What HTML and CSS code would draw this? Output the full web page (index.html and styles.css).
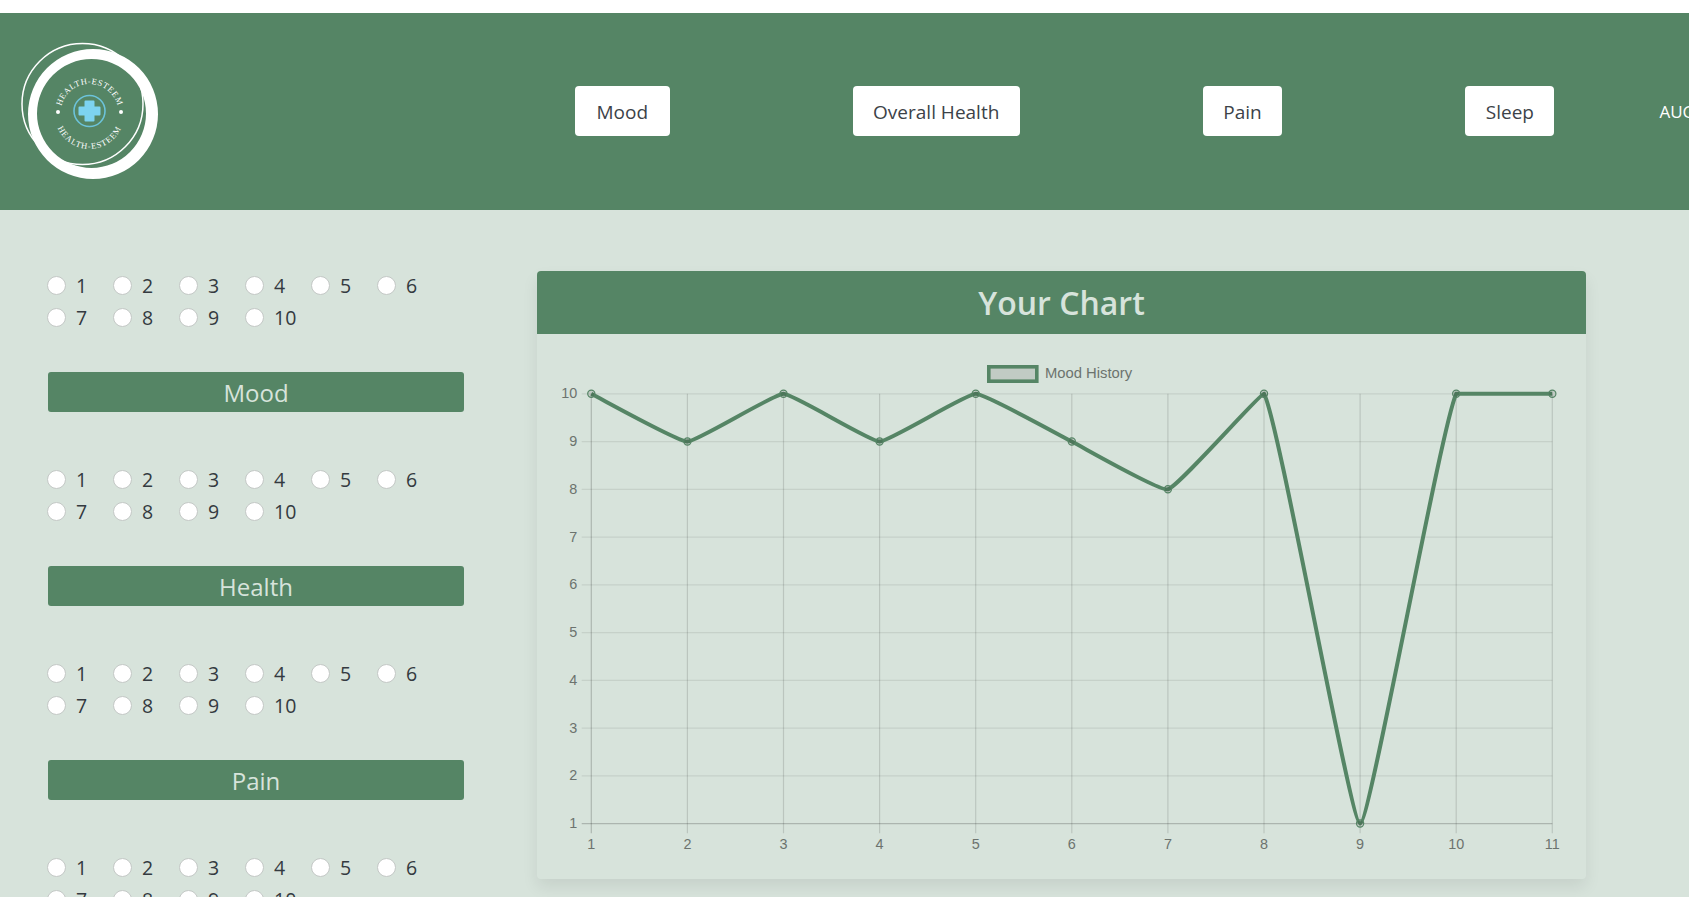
FILE: index.html
```html
<!DOCTYPE html>
<html lang="en">
<head>
    <meta charset="UTF-8">
    <meta name="viewport" content="width=device-width, initial-scale=1.0">
    <title>Health-Esteem</title>
    <link rel="stylesheet" href="styles.css">
</head>
<body>
    <header class="topbar">
        <svg class="logo" width="170" height="197" viewBox="0 13 170 197">
            <defs>
                <path id="arcTop" d="M 60.5 113 A 29 29 0 0 1 118.5 113"/>
                <path id="arcBottom" d="M 55 114.5 A 34.5 34.5 0 0 0 124 114.5"/>
            </defs>
            <path fill="#fff" fill-rule="evenodd" d="M 28 114 A 65 65 0 1 1 158 114 A 65 65 0 1 1 28 114 Z M 37 113.5 A 54.5 54.5 0 1 0 146 113.5 A 54.5 54.5 0 1 0 37 113.5 Z"/>
            <circle cx="82.5" cy="104" r="60.5" fill="none" stroke="#fff" stroke-width="1.5"/>
            <circle cx="89.5" cy="111" r="15.5" fill="none" stroke="#6cc3da" stroke-width="1.6"/>
            <path fill="#7dd3f0" d="M 85.5 100.5 h 8 a 1 1 0 0 1 1 1 v 5 h 5 a 1 1 0 0 1 1 1 v 7 a 1 1 0 0 1 -1 1 h -5 v 5 a 1 1 0 0 1 -1 1 h -8 a 1 1 0 0 1 -1 -1 v -5 h -5 a 1 1 0 0 1 -1 -1 v -7 a 1 1 0 0 1 1 -1 h 5 v -5 a 1 1 0 0 1 1 -1 Z"/>
            <circle cx="58" cy="112" r="2" fill="#fff"/>
            <circle cx="121" cy="112" r="2" fill="#fff"/>
            <text class="logo-text"><textPath href="#arcTop" startOffset="50%">HEALTH-ESTEEM</textPath></text>
            <text class="logo-text logo-text-bottom"><textPath href="#arcBottom" startOffset="50%">HEALTH-ESTEEM</textPath></text>
        </svg>
        <nav class="nav">
            <a class="nav-btn nav-btn-first" href="#">Mood</a>
            <a class="nav-btn" href="#">Overall Health</a>
            <a class="nav-btn" href="#">Pain</a>
            <a class="nav-btn" href="#">Sleep</a>
            <span class="nav-date">AUG</span>
        </nav>
    </header>

    <main class="content">
        <aside class="sidebar">
            <form class="rating">
                <div class="rating-options">
                    <label class="option"><input type="radio" name="mood">1</label>
                    <label class="option"><input type="radio" name="mood">2</label>
                    <label class="option"><input type="radio" name="mood">3</label>
                    <label class="option"><input type="radio" name="mood">4</label>
                    <label class="option"><input type="radio" name="mood">5</label>
                    <label class="option"><input type="radio" name="mood">6</label>
                    <label class="option"><input type="radio" name="mood">7</label>
                    <label class="option"><input type="radio" name="mood">8</label>
                    <label class="option"><input type="radio" name="mood">9</label>
                    <label class="option"><input type="radio" name="mood">10</label>
                </div>
                <button class="rating-btn" type="button">Mood</button>
            </form>
            <form class="rating">
                <div class="rating-options">
                    <label class="option"><input type="radio" name="health">1</label>
                    <label class="option"><input type="radio" name="health">2</label>
                    <label class="option"><input type="radio" name="health">3</label>
                    <label class="option"><input type="radio" name="health">4</label>
                    <label class="option"><input type="radio" name="health">5</label>
                    <label class="option"><input type="radio" name="health">6</label>
                    <label class="option"><input type="radio" name="health">7</label>
                    <label class="option"><input type="radio" name="health">8</label>
                    <label class="option"><input type="radio" name="health">9</label>
                    <label class="option"><input type="radio" name="health">10</label>
                </div>
                <button class="rating-btn" type="button">Health</button>
            </form>
            <form class="rating">
                <div class="rating-options">
                    <label class="option"><input type="radio" name="pain">1</label>
                    <label class="option"><input type="radio" name="pain">2</label>
                    <label class="option"><input type="radio" name="pain">3</label>
                    <label class="option"><input type="radio" name="pain">4</label>
                    <label class="option"><input type="radio" name="pain">5</label>
                    <label class="option"><input type="radio" name="pain">6</label>
                    <label class="option"><input type="radio" name="pain">7</label>
                    <label class="option"><input type="radio" name="pain">8</label>
                    <label class="option"><input type="radio" name="pain">9</label>
                    <label class="option"><input type="radio" name="pain">10</label>
                </div>
                <button class="rating-btn" type="button">Pain</button>
            </form>
            <form class="rating">
                <div class="rating-options">
                    <label class="option"><input type="radio" name="sleep">1</label>
                    <label class="option"><input type="radio" name="sleep">2</label>
                    <label class="option"><input type="radio" name="sleep">3</label>
                    <label class="option"><input type="radio" name="sleep">4</label>
                    <label class="option"><input type="radio" name="sleep">5</label>
                    <label class="option"><input type="radio" name="sleep">6</label>
                    <label class="option"><input type="radio" name="sleep">7</label>
                    <label class="option"><input type="radio" name="sleep">8</label>
                    <label class="option"><input type="radio" name="sleep">9</label>
                    <label class="option"><input type="radio" name="sleep">10</label>
                </div>
                <button class="rating-btn" type="button">Sleep</button>
            </form>
        </aside>

        <section class="card">
            <h2 class="card-header">Your Chart</h2>
            <svg id="moodChart" class="chart" width="1049" height="545" viewBox="0 0 1049 545"></svg>
        </section>
    </main>

    <script src="chart.js"></script>
</body>
</html>
```

FILE: styles.css
```css
html, body {
    height: 100%;
    overflow: hidden;
}
body {
    margin: 0;
    padding-top: 13px;
    box-sizing: border-box;
    background-color: #fff;
    font-family: "Open Sans", "Noto Sans", sans-serif;
    color: #212529;
}

/* top bar */
.topbar {
    display: flex;
    align-items: center;
    box-sizing: border-box;
    height: 197px;
    background-color: #558565;
}
.logo {
    flex: 0 0 auto;
    width: 170px;
    margin-right: 405px;
}
.logo-text {
    font-family: "Liberation Serif", serif;
    font-size: 8.5px;
    letter-spacing: 0.6px;
    text-anchor: middle;
    fill: #fff;
}
.logo-text-bottom {
    letter-spacing: 0.9px;
}
.nav {
    display: flex;
    align-items: center;
    flex: 0 0 auto;
    margin-bottom: 1px;
}
.nav-btn {
    display: block;
    flex: 0 0 auto;
    padding: 2px 20.5px 0;
    line-height: 48px;
    background-color: #fff;
    border-radius: 4px;
    font-size: 19px;
    color: #3c4248;
    text-decoration: none;
}
.nav-btn-first {
    padding-left: 21.5px;
    padding-right: 21.5px;
}
.nav-btn + .nav-btn {
    margin-left: 183px;
}
.nav-date {
    margin-left: 105px;
    font-size: 17px;
    color: #fff;
    white-space: nowrap;
}

/* page body */
.content {
    display: flex;
    align-items: flex-start;
    gap: 73px;
    padding: 59px 0 0 48px;
    min-height: 100%;
    background-color: #d7e3db;
}
.sidebar {
    flex: 0 0 416px;
}
.rating {
    margin-bottom: 51px;
}
.rating-options {
    display: grid;
    grid-template-columns: repeat(6, 66px);
    grid-auto-rows: 32px;
    margin: 0 0 39px -1px;
}
.option {
    display: flex;
    align-items: center;
    padding-top: 2px;
    font-size: 19.5px;
    line-height: 30px;
    color: #343a40;
}
.option input {
    appearance: none;
    flex: 0 0 auto;
    width: 19px;
    height: 19px;
    margin: -2px 10px 0 0;
    background-color: #fff;
    border: 1px solid #c4c8c6;
    border-radius: 50%;
}
.rating-btn {
    display: block;
    width: 100%;
    height: 40px;
    padding: 0;
    border: none;
    border-radius: 3px;
    background-color: #558565;
    color: #d7e3db;
    font-family: inherit;
    font-size: 24px;
}

/* chart card */
.card {
    flex: 0 0 1049px;
    margin-top: 2px;
    border-radius: 4px;
    box-shadow: 0 8px 16px rgba(0, 0, 0, 0.08);
}
.card-header {
    margin: 0;
    height: 63px;
    line-height: 63px;
    text-align: center;
    background-color: #558565;
    border-radius: 4px 4px 0 0;
    color: #d7e3db;
    font-size: 32px;
    font-weight: 600;
}
.chart {
    display: block;
}
.grid-h {
    stroke: rgba(0, 0, 0, 0.08);
    stroke-width: 1.2;
}
.grid-v {
    stroke: rgba(0, 0, 0, 0.13);
    stroke-width: 1.2;
}
.axis-line {
    stroke: rgba(0, 0, 0, 0.2);
    stroke-width: 1.2;
}
.tick-label, .legend-label {
    font-family: "Liberation Sans", Arial, sans-serif;
    font-size: 14.4px;
    fill: #6c736e;
}
.legend-label {
    font-size: 14.8px;
}
.mood-line {
    fill: none;
    stroke: #558565;
    stroke-width: 4;
}
.mood-point {
    fill: rgba(0, 0, 0, 0.1);
    stroke: #558565;
    stroke-width: 1.2;
}
.legend-box {
    fill: rgba(0, 0, 0, 0.1);
    stroke: #558565;
    stroke-width: 3.6;
}
```

FILE: chart.js
```js
// Draws the mood history line chart into the svg
const moodHistory = [10, 9, 10, 9, 10, 9, 8, 10, 1, 10, 10];

const chart = document.getElementById('moodChart');
const SVG_NS = 'http://www.w3.org/2000/svg';

const left = 54.3;
const stepX = 96.1;
const top_ = 59.8;
const stepY = 47.75;
const right = left + stepX * (moodHistory.length - 1);
const bottom = top_ + stepY * 9;
const tension = 0.1;

function add(tag, className, attrs, text) {
    const el = document.createElementNS(SVG_NS, tag);
    el.setAttribute('class', className);
    for (const key in attrs) {
        el.setAttribute(key, attrs[key]);
    }
    if (text !== undefined) {
        el.textContent = text;
    }
    chart.appendChild(el);
    return el;
}

// grid and tick labels
for (let value = 10; value >= 1; value--) {
    const y = top_ + stepY * (10 - value);
    add('line', value === 1 ? 'axis-line' : 'grid-h', { x1: left - 9.6, x2: right, y1: y, y2: y });
    add('text', 'tick-label', { x: left - 14, y: y + 4.5, 'text-anchor': 'end' }, value);
}
moodHistory.forEach(function (_, i) {
    const x = left + stepX * i;
    add('line', i === 0 ? 'axis-line' : 'grid-v', { x1: x, x2: x, y1: top_, y2: bottom + 9.6 });
    add('text', 'tick-label', { x: x, y: bottom + 25, 'text-anchor': 'middle' }, i + 1);
});

// legend
add('rect', 'legend-box', { x: 451.8, y: 32.8, width: 48, height: 14.4 });
add('text', 'legend-label', { x: 508, y: 43.5 }, 'Mood History');

// smooth line, control points kept inside the plot area
const points = moodHistory.map(function (value, i) {
    return { x: left + stepX * i, y: top_ + stepY * (10 - value) };
});

function clamp(value, min, max) {
    return Math.max(min, Math.min(max, value));
}

const controls = points.map(function (point, i) {
    const prev = points[i - 1] || point;
    const next = points[i + 1] || point;
    const d01 = Math.hypot(point.x - prev.x, point.y - prev.y);
    const d12 = Math.hypot(next.x - point.x, next.y - point.y);
    const s01 = d01 / (d01 + d12);
    const s12 = d12 / (d01 + d12);
    const dx = next.x - prev.x;
    const dy = next.y - prev.y;
    return {
        inX: clamp(point.x - tension * s01 * dx, left, right),
        inY: clamp(point.y - tension * s01 * dy, top_, bottom),
        outX: clamp(point.x + tension * s12 * dx, left, right),
        outY: clamp(point.y + tension * s12 * dy, top_, bottom)
    };
});

let d = 'M ' + points[0].x + ' ' + points[0].y;
for (let i = 1; i < points.length; i++) {
    d += ' C ' + controls[i - 1].outX + ' ' + controls[i - 1].outY + ' ' +
        controls[i].inX + ' ' + controls[i].inY + ' ' + points[i].x + ' ' + points[i].y;
}
add('path', 'mood-line', { d: d });

points.forEach(function (point) {
    add('circle', 'mood-point', { cx: point.x, cy: point.y, r: 3.6 });
});
```
